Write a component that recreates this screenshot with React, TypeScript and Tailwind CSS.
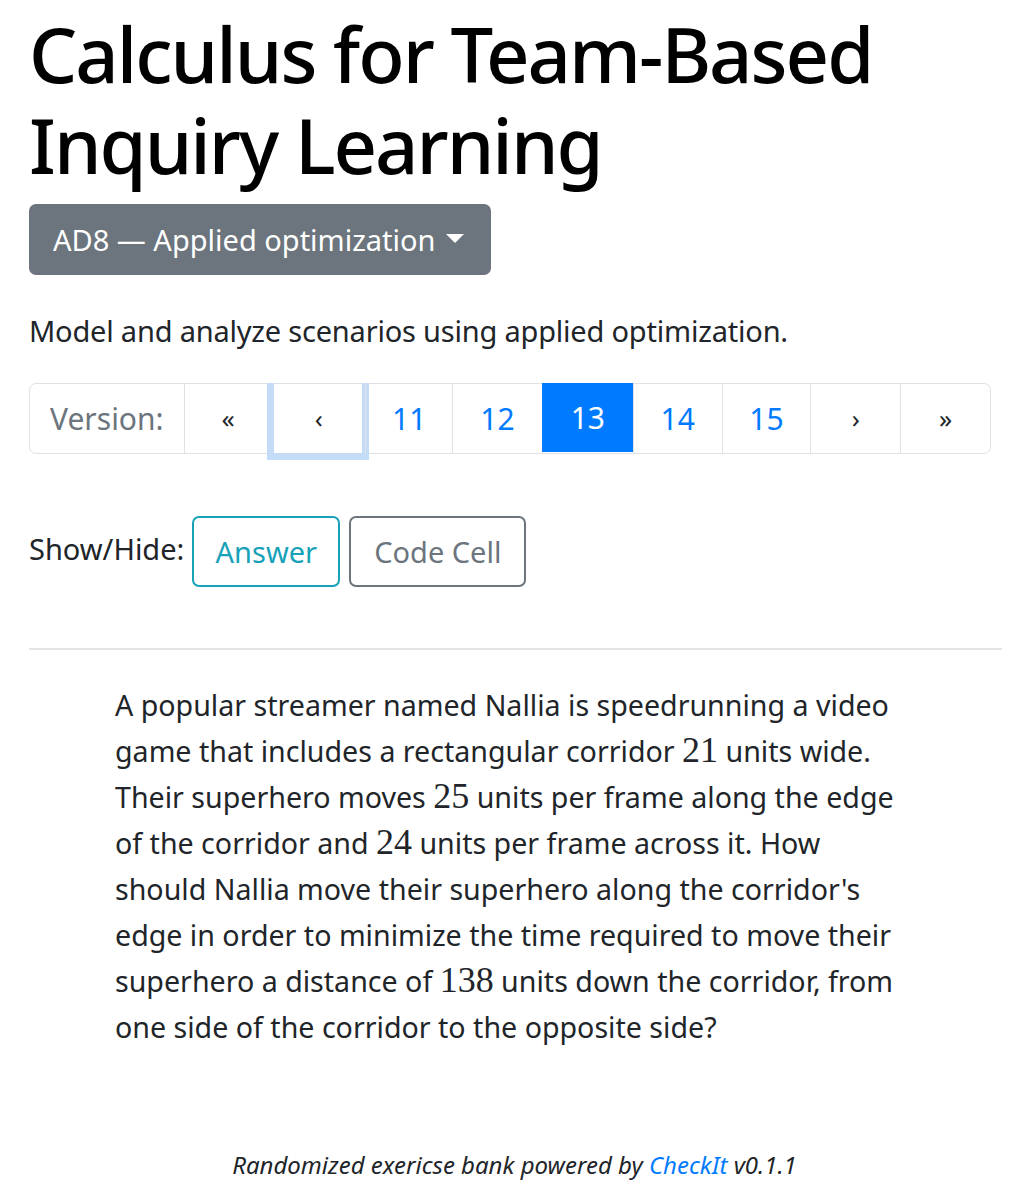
import React from "react";

const F = { fontFamily: '"Noto Sans", "Open Sans", sans-serif' };
const M = { fontFamily: '"Liberation Serif", "DejaVu Serif", serif' };

function N({ children }: { children: React.ReactNode }) {
  return (
    <span className="text-[36px] leading-none" style={M}>
      {children}
    </span>
  );
}

function Cell({
  w,
  children,
  cls = "",
  first = false,
}: {
  w: string;
  children?: React.ReactNode;
  cls?: string;
  first?: boolean;
}) {
  return (
    <div
      className={`relative flex items-center justify-center h-full ${w} ${
        first ? "" : "border-l border-[#dee2e6]"
      } ${cls}`}
    >
      {children}
    </div>
  );
}

export default function App() {
  return (
    <div className="bg-white min-h-[1200px] text-[#212529] pl-[29px] pr-[21px]" style={F}>
      <h1 className="pt-[8px] text-[76px] leading-[91px] font-medium text-black tracking-[-2px]">
        Calculus for Team-Based
        <br />
        Inquiry Learning
      </h1>

      <button className="mt-[14px] h-[71px] w-[462px] rounded-[7px] bg-[#6c757d] text-white text-[29px] flex items-center pl-[24px]">
        <span>AD8 — Applied optimization</span>
        <span className="ml-[10px] inline-block w-0 h-0 border-l-[9px] border-r-[9px] border-t-[9px] border-l-transparent border-r-transparent border-t-white mb-[2px]"></span>
      </button>

      <p className="mt-[33px] text-[29px] leading-[45px] text-[#212529] tracking-[-0.2px]">
        Model and analyze scenarios using applied optimization.
      </p>

      <div className="mt-[30px] w-[962px] h-[71px] flex border border-[#dee2e6] rounded-[7px] text-[30px]">
        <Cell w="w-[154px]" first cls="text-[#6c757d]">Version:</Cell>
        <Cell w="w-[88px]" cls="text-[#212529] text-[26px]">«</Cell>
        <Cell w="w-[94px]" cls="text-[#212529] text-[26px]">
          ‹
          <span className="absolute left-[-5px] right-[-4px] top-[-1px] bottom-[-7px] border-l-[7px] border-r-[7px] border-b-[7px] border-[#c4dcf8]"></span>
        </Cell>
        <Cell w="w-[87px]" cls="text-[#007bff]">11</Cell>
        <Cell w="w-[90px]" cls="text-[#007bff]">12</Cell>
        <Cell w="w-[91px]" cls="bg-[#007bff] text-white border-l-[#007bff] -my-px h-[71px]">13</Cell>
        <Cell w="w-[89px]" cls="text-[#007bff]">14</Cell>
        <Cell w="w-[89px]" cls="text-[#007bff]">15</Cell>
        <Cell w="w-[90px]" cls="text-[#212529] text-[26px]">›</Cell>
        <Cell w="w-[90px]" cls="text-[#212529] text-[26px]">»</Cell>
      </div>

      <div className="mt-[62px] flex items-start">
        <span className="text-[29px] leading-[45px] mt-[10px] mr-[8px]">Show/Hide:</span>
        <button className="h-[71px] w-[148px] rounded-[7px] border-2 border-[#17a2b8] text-[#17a2b8] text-[29px]">
          Answer
        </button>
        <button className="ml-[9px] h-[71px] w-[177px] rounded-[7px] border-2 border-[#6c757d] text-[#6c757d] text-[29px]">
          Code Cell
        </button>
      </div>

      <div className="mt-[61px] h-[2px] bg-[#e4e4e4]"></div>

      <div className="mt-[32px] pl-[86px] text-[28.6px] leading-[46px] text-[#212529] whitespace-nowrap">
        A popular streamer named Nallia is speedrunning a video
        <br />
        game that includes a rectangular corridor <N>21</N> units wide.
        <br />
        Their superhero moves <N>25</N> units per frame along the edge
        <br />
        of the corridor and <N>24</N> units per frame across it. How
        <br />
        should Nallia move their superhero along the corridor's
        <br />
        edge in order to minimize the time required to move their
        <br />
        superhero a distance of <N>138</N> units down the corridor, from
        <br />
        one side of the corridor to the opposite side?
      </div>

      <div className="mt-[97px] text-center italic text-[24px] leading-[36px] text-[#212529] pr-[2px]">
        Randomized exericse bank powered by <span className="text-[#007bff]">CheckIt</span> v0.1.1
      </div>
    </div>
  );
}
